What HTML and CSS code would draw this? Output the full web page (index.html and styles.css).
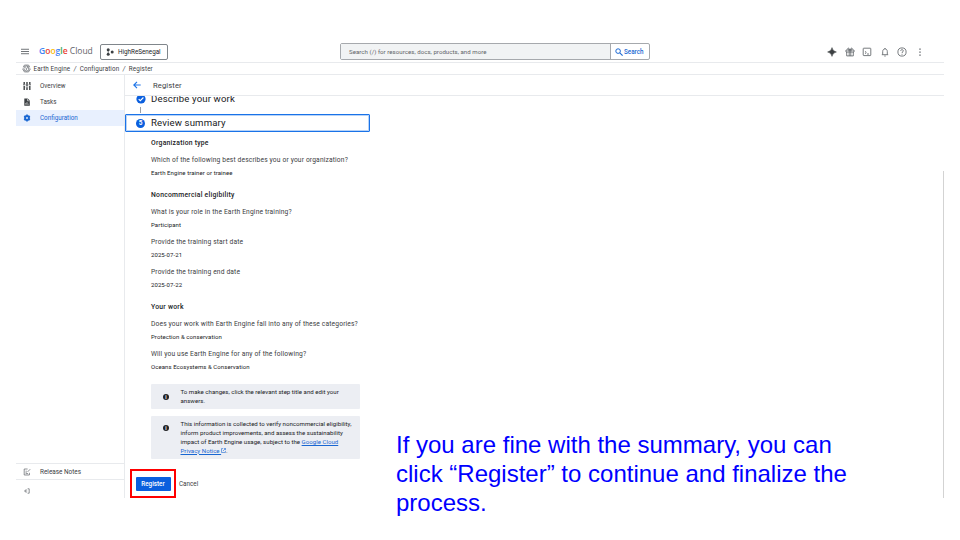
FILE: index.html
```
<!DOCTYPE html>
<html lang="en">
<head>
<meta charset="utf-8">
<title>Register - Google Cloud</title>
<link rel="stylesheet" href="styles.css">
</head>
<body>
<div class="slide">
  <div class="console">
    <header class="topbar">
      <svg class="menu" viewBox="0 0 9 7"><path d="M0 1h9M0 3.5h9M0 6h9" stroke="#5f6368" stroke-width="1"/></svg>
      <div class="logo"><b class="blue">G</b><b class="red">o</b><b class="yellow">o</b><b class="blue">g</b><b class="green">l</b><b class="red">e</b> <span>Cloud</span></div>
      <div class="project">
        <svg viewBox="0 0 8 8"><circle cx="2.2" cy="1.7" r="1.5"/><circle cx="2.2" cy="6.2" r="1.5"/><circle cx="6.2" cy="4.1" r="1.5"/><path d="M2.2 2v4" stroke="#3c4043" stroke-width=".7"/></svg>
        <span>HighReSenegal</span>
      </div>
      <div class="search">
        <div class="field"><span>Search (/) for resources, docs, products, and more</span></div>
        <div class="go"><svg viewBox="0 0 8 8"><circle cx="3.1" cy="3.1" r="2.3" fill="none" stroke="#1967d2" stroke-width="1"/><path d="M4.8 4.8 7.6 7.6" stroke="#1967d2" stroke-width="1.1"/></svg><span>Search</span></div>
      </div>
      <div class="tools">
        <svg viewBox="0 0 10 10"><path d="M5 .6Q5.7 4.3 9.4 5 5.7 5.7 5 9.4 4.3 5.7.6 5 4.3 4.3 5 .6Z" fill="#3c4043" stroke="#3c4043" stroke-width=".5"/></svg>
        <svg viewBox="0 0 10 10"><path d="M1 3h8v2H1zM1.7 5v3.9h6.6V5M4.2 3v5.9M5.8 3v5.9M5 3C4.4 1 2.8.6 2.7 1.8 2.6 2.6 3.3 3 5 3 6.7 3 7.4 2.6 7.3 1.8 7.2.6 5.6 1 5 3Z"/></svg>
        <svg viewBox="0 0 10 10"><rect x="1.2" y="1.2" width="7.6" height="7.4" rx=".6"/><path d="M3 4.3 4.3 5.5 3 6.7M5 7h2"/></svg>
        <svg viewBox="0 0 10 10"><path d="M1.8 7.7h6.4M2.7 7.5V4.6C2.7 1 7.3 1 7.3 4.6v2.9M5 2V1M4.3 9h1.4"/></svg>
        <svg viewBox="0 0 10 10"><circle cx="5" cy="5" r="4.1"/><path d="M3.7 4C3.7 2.2 6.4 2.3 6.3 3.9 6.2 4.9 5 4.9 5 6M5 6.8v.9"/></svg>
        <svg viewBox="0 0 10 10"><path d="M5 1.4v1.3M5 4.4v1.3M5 7.4v1.3" stroke-width="1.4"/></svg>
      </div>
    </header>
    <nav class="crumbs">
      <svg viewBox="0 0 10 10"><circle cx="5" cy="5" r="2.9"/><path d="M1.4 3.5 2.7 1.2H7.3L8.6 3.5M.5 5.2 2.7 8.8H7.3L9.5 5.2M3.5 4 5.2 5 4.6 7M6 2.5 5.9 4 7.7 5"/></svg>
      <span>Earth Engine</span><i>/</i><span>Configuration</span><i>/</i><span>Register</span>
    </nav>
    <div class="body">
      <aside class="side">
        <ul>
          <li><svg viewBox="0 0 8 8"><path d="M1.2 0v2.3M1.2 4V8M4 0v4M4 5.7V8M6.8 0v2.3M6.8 4V8" stroke="#3c4043" stroke-width="1.4"/><path d="M0 2.8h2.4M2.8 5.1h2.4M5.6 2.8H8" stroke="#3c4043" stroke-width=".8"/></svg><span>Overview</span></li>
          <li><svg viewBox="0 0 8 8"><path d="M1.3.4h3.4l2.1 2.1v5.2H1.3z" fill="#3c4043"/><path d="M4.5.8v2h2M2.8 6.7V5M4 6.7V4.1M5.2 6.7v-1" stroke="#fff" stroke-width=".6" fill="none"/></svg><span>Tasks</span></li>
          <li class="active"><svg viewBox="0 0 8 8"><circle cx="4" cy="4" r="1.9" fill="none" stroke="#1967d2" stroke-width="2"/><path d="M4 .6v1M4 6.4v1M1.1 2.3l.8.5M6.1 5.2l.8.5M1.1 5.7l.8-.5M6.1 2.8l.8-.5" stroke="#1967d2" stroke-width="1.6"/></svg><span>Configuration</span></li>
        </ul>
        <div class="notes"><svg viewBox="0 0 8 8"><path d="M4.6 1H1.2v6h5.2V4.8M2.6 3.2h1.2M2.6 4.4h1M2.6 5.6h2.4M4.6 3.9 7.2 1.2" fill="none" stroke="#5f6368" stroke-width=".7"/></svg><span>Release Notes</span></div>
        <div class="collapse"><svg viewBox="0 0 8 8"><path d="M3.4 2.2 1.6 4l1.8 1.8M1.8 4h2.4M4.6 1.8h1.6v4.4H4.6" fill="none" stroke="#5f6368" stroke-width=".7"/></svg></div>
      </aside>
      <main class="main">
        <div class="title"><svg viewBox="0 0 8 8"><path d="M7.7 4H.8M4 .8.8 4 4 7.2" fill="none" stroke="#1a73e8" stroke-width="1.1"/></svg><h1>Register</h1></div>
        <div class="scroller">
          <div class="step done"><svg viewBox="0 0 10 10"><circle cx="5" cy="5" r="4.6" fill="#0b5fde"/><path d="M2.7 5.1 4.3 6.7 7.4 3.5" fill="none" stroke="#fff" stroke-width="1.1"/></svg><h2>Describe your work</h2></div>
          <div class="connector"></div>
          <div class="step current"><span class="num">5</span><h2>Review summary</h2></div>
          <div class="summary">
            <h3>Organization type</h3>
            <p class="q">Which of the following best describes you or your organization?</p>
            <p class="a">Earth Engine trainer or trainee</p>
            <h3>Noncommercial eligibility</h3>
            <p class="q">What is your role in the Earth Engine training?</p>
            <p class="a">Participant</p>
            <p class="q">Provide the training start date</p>
            <p class="a">2025-07-21</p>
            <p class="q">Provide the training end date</p>
            <p class="a">2025-07-22</p>
            <h3>Your work</h3>
            <p class="q">Does your work with Earth Engine fall into any of these categories?</p>
            <p class="a">Protection &amp; conservation</p>
            <p class="q">Will you use Earth Engine for any of the following?</p>
            <p class="a">Oceans Ecosystems &amp; Conservation</p>
            <div class="notice first"><span class="info">i</span><p>To make changes, click the relevant step title and edit your<br>answers.</p></div>
            <div class="notice second"><span class="info">i</span><p>This information is collected to verify noncommercial eligibility,<br>inform product improvements, and assess the sustainability<br>impact of Earth Engine usage, subject to the <a>Google Cloud</a><br><a>Privacy Notice <svg viewBox="0 0 6 6"><path d="M2.5.7H.6v4.7h4.7V3.5M3.5.6h1.9v1.9M5.3.7 2.3 3.7" fill="none" stroke="#1967d2" stroke-width=".7"/></svg></a>.</p></div>
          </div>
        </div>
        <div class="actions"><div class="highlight"><button>Register</button></div><span>Cancel</span></div>
      </main>
    </div>
  </div>
  <p class="caption">If you are fine with the summary, you can<br>click “Register” to continue and finalize the<br>process.</p>
</div>
</body>
</html>
```
FILE: styles.css
```
* { box-sizing: border-box; }
body, h1, h2, h3, p, ul { margin: 0; padding: 0; }
body { background: #fff; font-family: Roboto, "Liberation Sans", sans-serif; color: #3c4043; font-size: 6.4px; }
svg { display: block; flex: none; }
.slide { position: relative; width: 960px; height: 540px; overflow: hidden; padding: 41px 16px 0; }
.console { position: relative; width: 928px; height: 457px; display: flex; flex-direction: column; }
.console::after { content: ""; position: absolute; right: 0; top: 130px; width: 1px; bottom: 0; background: #d3d3d3; }

.topbar { height: 22px; flex: none; display: flex; align-items: center; border-bottom: 1px solid #e8eaed; padding-left: 5px; white-space: nowrap; }
.menu { width: 8px; height: 7px; }
.logo { margin-left: 10px; width: 61px; font-family: "Open Sans", sans-serif; font-size: 8.5px; line-height: 12px; color: #5f6368; position: relative; top: -1px; }
.logo b { font-weight: 600; }
.blue { color: #4285f4; } .red { color: #ea4335; } .yellow { color: #fbbc04; } .green { color: #34a853; }
.project { width: 68px; height: 16px; border: 1px solid #80868b; border-radius: 2px; display: flex; align-items: center; padding-left: 5px; gap: 4px; color: #202124; }
.project svg { width: 8px; height: 8px; fill: #3c4043; }
.project span { font-size: 6.3px; }
.search { margin-left: 172px; display: flex; width: 310px; height: 17px; border: 1px solid #a6a9ad; border-radius: 2px; }
.field { width: 270px; background: #f1f3f4; border-right: 1px solid #a6a9ad; display: flex; align-items: center; padding-left: 8px; color: #5f6368; font-size: 6.1px; letter-spacing: .04px; }
.go { flex: 1; display: flex; align-items: center; padding-left: 4px; gap: 1px; color: #1967d2; font-weight: 500; font-size: 6.3px; }
.go svg { width: 8px; height: 8px; }
.tools { margin-left: 177px; display: flex; gap: 7.6px; }
.tools svg { width: 10px; height: 10px; fill: none; stroke: #5f6368; stroke-width: .85; }

.crumbs { height: 12px; flex: none; display: flex; align-items: center; padding-left: 6px; border-bottom: 1px solid #e8eaed; font-size: 6.3px; letter-spacing: .12px; }
.crumbs svg { width: 9px; height: 9px; margin-right: 2.5px; fill: none; stroke: #5f6368; stroke-width: .8; }
.crumbs i { width: 9.5px; text-align: center; }

.body { flex: 1; min-height: 0; display: flex; }
.side { width: 109px; border-right: 1px solid #e8eaed; display: flex; flex-direction: column; }
.side ul { list-style: none; flex: 1; padding-top: 3px; }
.side li { height: 16px; display: flex; align-items: center; padding-left: 6.5px; gap: 9.5px; font-size: 6.3px; }
.side li svg { width: 8px; height: 8px; }
.side .active { background: #e8f0fe; color: #1967d2; }
.notes { height: 17px; border: solid #e8eaed; border-width: 1px 0; display: flex; align-items: center; padding-left: 6.5px; gap: 9.5px; }
.notes svg, .collapse svg { width: 8px; height: 8px; }
.collapse { height: 18px; padding: 7px 0 0 6.5px; }

.main { flex: 1; display: flex; flex-direction: column; white-space: nowrap; }
.title { height: 21px; flex: none; border-bottom: 1px solid #e8eaed; display: flex; align-items: center; padding-left: 8px; gap: 12px; }
.title svg { width: 8px; height: 8px; }
h1 { font-size: 7.6px; font-weight: 400; letter-spacing: .12px; }
.scroller { height: 374px; overflow: hidden; }
.step { display: flex; align-items: center; }
h2 { font-size: 9.6px; line-height: 12px; font-weight: 400; color: #202124; letter-spacing: .14px; }
.done { height: 12px; margin-top: -3px; padding-left: 10.5px; gap: 5.5px; }
.done svg { width: 10px; height: 10px; }
.connector { width: 1px; height: 6px; margin: 2px 0 1px 15px; background: #9aa0a6; }
.current { width: 245px; height: 18px; border: 1px solid #1a73e8; outline: 1px solid #1a73e850; outline-offset: -2px; border-radius: 1px; padding-left: 10px; gap: 6px; }
.num { width: 9px; height: 9px; border-radius: 50%; background: #0b5fde; color: #fff; font-size: 6.5px; line-height: 9px; text-align: center; font-weight: 700; }
.summary { padding: 5.5px 0 0 26px; }
h3 { font-size: 6.8px; line-height: 10px; font-weight: 500; color: #202124; letter-spacing: .25px; margin-bottom: 7.5px; }
.q { font-size: 6.7px; line-height: 10px; margin-bottom: 4px; letter-spacing: .145px; }
.a { font-size: 6px; line-height: 8px; color: #202124; margin-bottom: 8px; letter-spacing: .08px; }
.a + h3 { margin-top: 12.5px; }
.notice { width: 209px; background: #eceef3; border-radius: 1px; display: flex; align-items: center; padding-left: 12px; gap: 11.5px; font-size: 6.1px; line-height: 8.9px; color: #202124; letter-spacing: .012px; }
.first { height: 25px; margin-top: 13px; }
.second { height: 43px; margin-top: 7px; align-items: flex-start; padding-top: 4px; }
.info { width: 6px; height: 6px; border-radius: 50%; background: #202124; color: #fff; font-weight: 700; font-size: 5px; line-height: 6px; text-align: center; flex: none; }
.second .info { margin-top: 5px; }
a { color: #1967d2; text-decoration: underline; text-underline-offset: 1px; }
a svg { display: inline-block; width: 5px; height: 5px; vertical-align: -.5px; }
.actions { display: flex; align-items: center; height: 29px; padding-left: 5px; gap: 3px; font-size: 6.3px; }
.highlight { width: 46px; height: 29px; border: 2px solid #f00; display: flex; align-items: center; justify-content: center; }
button { width: 35px; height: 14px; padding: 0; border: 0; border-radius: 1px; background: #0b5fde; color: #fff; font: 500 6.3px Roboto, sans-serif; }
.caption { position: absolute; left: 396px; top: 430px; font-family: "Liberation Sans", Arial, sans-serif; font-size: 24px; line-height: 29px; color: #00f; white-space: nowrap; }
```
